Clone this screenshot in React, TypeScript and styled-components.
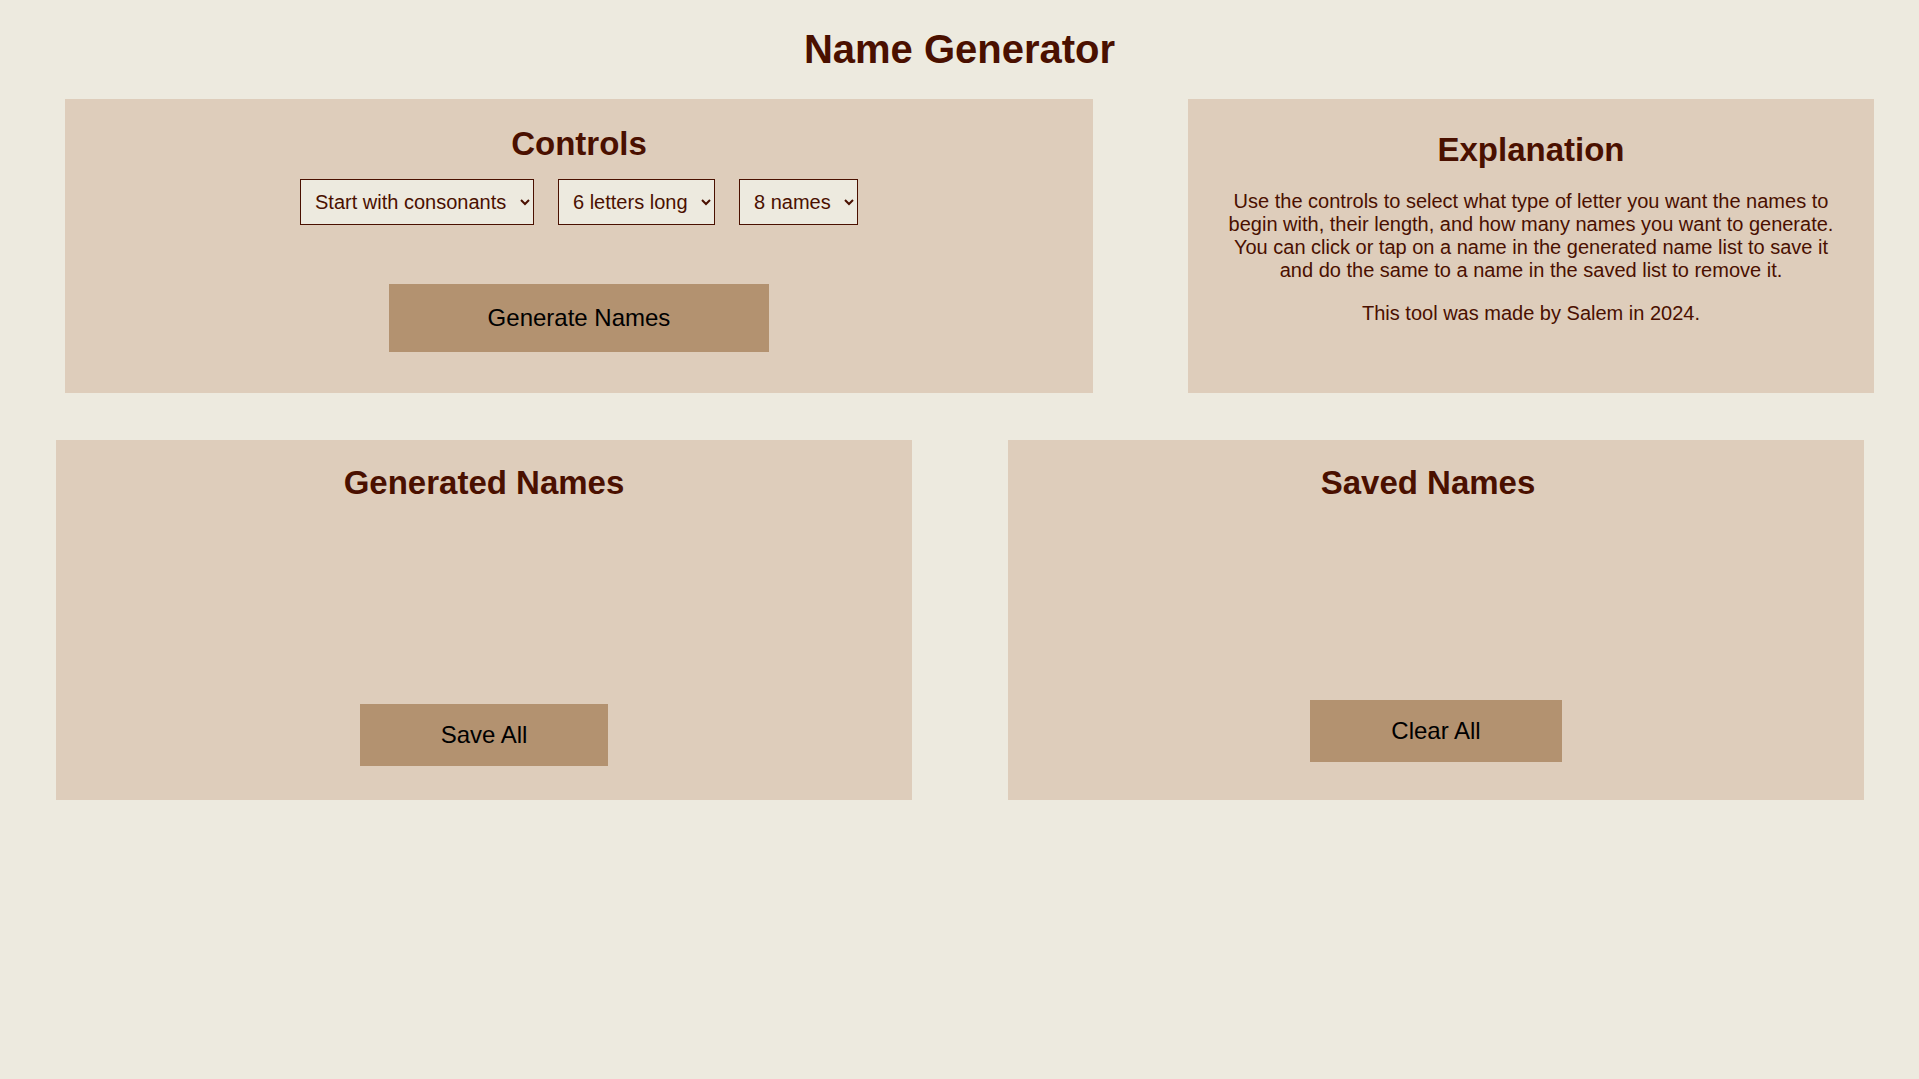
import React from "react";
import styled, { createGlobalStyle } from "styled-components";

const Global = createGlobalStyle`
  html, body {
    margin: 0;
    padding: 0;
    background: #edeadf;
  }
  body {
    font-family: "Liberation Sans", Arial, sans-serif;
    color: #4a1000;
  }
`;

const Page = styled.div`
  display: flex;
  flex-direction: column;
  min-height: 1079px;
`;

const Title = styled.h1`
  margin: 26.8px 0;
  font-size: 40px;
  font-weight: 700;
  line-height: normal;
  text-align: center;
  color: #4a1000;
`;

const TopRow = styled.div`
  display: flex;
  gap: 95px;
  padding: 0 45px 0 65px;
`;

const BottomRow = styled.div`
  display: flex;
  gap: 96px;
  padding: 0 55px 0 56px;
  margin-top: 47px;
`;

const Panel = styled.section<{ $width: number; $pt: number; $pb?: number }>`
  flex: 0 0 ${(p) => p.$width}px;
  box-sizing: border-box;
  background: #decdbb;
  display: flex;
  flex-direction: column;
  align-items: center;
  padding: ${(p) => p.$pt}px 0 ${(p) => p.$pb ?? 0}px;
`;

const PanelTitle = styled.h2<{ $shift?: number }>`
  margin: 0;
  font-size: 33px;
  font-weight: 700;
  line-height: normal;
  color: #4a1000;
  text-align: center;
  padding-right: ${(p) => p.$shift ?? 0}px;
`;

const SelectRow = styled.div`
  display: flex;
  gap: 24px;
  margin-top: 16px;
`;

const Select = styled.select`
  font-family: "Liberation Sans", Arial, sans-serif;
  font-size: 20px;
  color: #4a1000;
  background-color: #edeadf;
  border: 1px solid #4a1000;
  border-radius: 0;
  padding: 10px;
  height: 46px;
`;

const Button = styled.button<{ $px: number; $py: number }>`
  font-family: "Liberation Sans", Arial, sans-serif;
  font-size: 24px;
  line-height: normal;
  color: #000;
  background: #b39270;
  border: 1px solid #b39270;
  border-radius: 0;
  padding: ${(p) => p.$py}px ${(p) => p.$px}px;
  cursor: pointer;
`;

const Spacer = styled.div<{ $h: number }>`
  height: ${(p) => p.$h}px;
`;

const Explanation = styled.div`
  padding: 0 37px;
  text-align: center;
  margin-top: 21px;
`;

const Para = styled.p`
  margin: 0 0 20px;
  font-size: 20px;
  line-height: normal;
  color: #4a1000;
`;

const NameList = styled.ul<{ $h: number }>`
  list-style: none;
  margin: 0;
  padding: 0;
  height: ${(p) => p.$h}px;
`;

export default function App() {
  return (
    <Page>
      <Global />
      <Title>Name Generator</Title>
      <TopRow>
        <Panel $width={1028} $pt={26} $pb={41}>
          <PanelTitle>Controls</PanelTitle>
          <SelectRow>
            <Select defaultValue="consonants">
              <option value="consonants">Start with consonants</option>
              <option value="vowels">Start with vowels</option>
            </Select>
            <Select defaultValue="6">
              <option value="4">4 letters long</option>
              <option value="5">5 letters long</option>
              <option value="6">6 letters long</option>
              <option value="7">7 letters long</option>
              <option value="8">8 letters long</option>
            </Select>
            <Select defaultValue="8">
              <option value="2">2 names</option>
              <option value="4">4 names</option>
              <option value="6">6 names</option>
              <option value="8">8 names</option>
            </Select>
          </SelectRow>
          <Spacer $h={59} />
          <Button $px={98} $py={19}>Generate Names</Button>
        </Panel>
        <Panel $width={686} $pt={32}>
          <PanelTitle>Explanation</PanelTitle>
          <Explanation>
            <Para>
              Use the controls to select what type of letter you want the names to begin with, their
              length, and how many names you want to generate. You can click or tap on a name in the
              generated name list to save it and do the same to a name in the saved list to remove it.
            </Para>
            <Para>This tool was made by Salem in 2024.</Para>
          </Explanation>
        </Panel>
      </TopRow>
      <BottomRow>
        <Panel $width={856} $pt={24} $pb={34}>
          <PanelTitle>Generated Names</PanelTitle>
          <NameList $h={202} />
          <Button $px={80} $py={16}>Save All</Button>
        </Panel>
        <Panel $width={856} $pt={24} $pb={38}>
          <PanelTitle $shift={16}>Saved Names</PanelTitle>
          <NameList $h={198} />
          <Button $px={80} $py={16}>Clear All</Button>
        </Panel>
      </BottomRow>
    </Page>
  );
}
